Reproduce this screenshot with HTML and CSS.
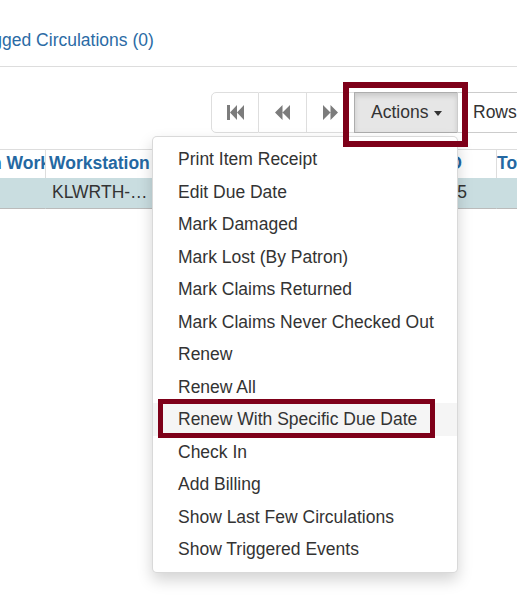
FILE: index.html
```html
<!DOCTYPE html>
<html>
<head>
<meta charset="utf-8">
<link rel="stylesheet" href="styles.css">
</head>
<body>
<div class="page">
  <div class="tabs">
    <a class="tab-link">Flagged Circulations (0)</a>
  </div>

  <div class="toolbar">
    <div class="pager">
      <button class="pg-btn first" aria-label="First">
        <svg width="17" height="15" viewBox="0 0 17 15"><rect x="0" y="0" width="3" height="15"/><path d="M3 7.5 L10 0 V15 Z M10 7.5 L17 0 V15 Z"/></svg>
      </button>
      <button class="pg-btn" aria-label="Previous">
        <svg width="15" height="15" viewBox="0 0 15 15"><path d="M0 7.5 L7.5 0 V15 Z M7.5 7.5 L15 0 V15 Z"/></svg>
      </button>
      <button class="pg-btn" aria-label="Next">
        <svg width="15" height="15" viewBox="0 0 15 15"><path d="M15 7.5 L7.5 0 V15 Z M7.5 7.5 L0 0 V15 Z"/></svg>
      </button>
    </div>
    <button class="actions-btn">Actions<span class="caret"></span></button>
    <button class="rows-btn">Rows 25</button>
  </div>

  <div class="grid">
    <div class="th c1"><span class="clip">n Workstation</span></div>
    <div class="th c2">Workstation</div>
    <div class="th c3">Due Date</div>
    <div class="th c4">ID</div>
    <div class="th c5">Total</div>
    <div class="td c1"></div>
    <div class="td c2">KLWRTH-…</div>
    <div class="td c3"></div>
    <div class="td c4">5</div>
    <div class="td c5"></div>
  </div>

  <ul class="menu">
    <li>Print Item Receipt</li>
    <li>Edit Due Date</li>
    <li>Mark Damaged</li>
    <li>Mark Lost (By Patron)</li>
    <li>Mark Claims Returned</li>
    <li>Mark Claims Never Checked Out</li>
    <li>Renew</li>
    <li>Renew All</li>
    <li class="hover">Renew With Specific Due Date</li>
    <li>Check In</li>
    <li>Add Billing</li>
    <li>Show Last Few Circulations</li>
    <li>Show Triggered Events</li>
  </ul>

  <div class="callout callout-actions"></div>
  <div class="callout callout-item"></div>
</div>
</body>
</html>
```

FILE: styles.css
```css
html, body {
  margin: 0;
  padding: 0;
  background: #fff;
}

.page {
  position: relative;
  width: 517px;
  height: 611px;
  overflow: hidden;
  font-family: "Liberation Sans", Arial, sans-serif;
  font-size: 17.5px;
  line-height: 25px;
  color: #333;
}

.tabs {
  height: 38px;
  padding-top: 28px;
  border-bottom: 1px solid #ddd;
  white-space: nowrap;
}

.tab-link {
  display: inline-block;
  margin-left: -32px;
  color: #2b6ba5;
  text-decoration: none;
}

.toolbar {
  display: flex;
  margin-top: 25px;
  padding-left: 211px;
  height: 41px;
  width: 700px;
  white-space: nowrap;
}

.toolbar > * {
  flex-shrink: 0;
}

.pager {
  display: flex;
}

.pg-btn {
  flex-shrink: 0;
  width: 48px;
  height: 41px;
  box-sizing: border-box;
  border: 1px solid #dedede;
  border-left: none;
  background: #fff;
  padding: 0;
  display: flex;
  align-items: center;
  justify-content: center;
  fill: #7c7c7c;
}

.pg-btn.first {
  border-left: 1px solid #dedede;
  border-radius: 5px 0 0 5px;
}

.actions-btn {
  margin-left: -1px;
  width: 104px;
  height: 41px;
  box-sizing: border-box;
  border: 1px solid #adadad;
  background: #e6e6e6;
  box-shadow: inset 0 3px 5px rgba(0, 0, 0, 0.125);
  padding: 0 0 0 16px;
  display: flex;
  align-items: center;
  font: inherit;
  color: #333;
}

.caret {
  display: inline-block;
  margin-left: 6px;
  margin-top: 2px;
  width: 0;
  height: 0;
  border-top: 5px solid #333;
  border-left: 4.5px solid transparent;
  border-right: 4.5px solid transparent;
}

.rows-btn {
  margin-left: -1px;
  height: 41px;
  box-sizing: border-box;
  border: 1px solid #ccc;
  border-radius: 0 5px 5px 0;
  background: #fff;
  padding: 0 15px;
  font: inherit;
  color: #333;
}

.grid {
  display: grid;
  grid-template-columns: 45px 110px 200px 141px 100px;
  margin-top: 16px;
  width: 596px;
  border-top: 1px solid #ddd;
}

.th, .td {
  white-space: nowrap;
  overflow: hidden;
  box-sizing: border-box;
  border-left: 1px solid #ddd;
}

.th.c1, .td.c1 {
  border-left: none;
}

.th {
  height: 28px;
  padding-top: 1px;
  font-weight: bold;
  color: #2468a2;
}

.td {
  height: 31px;
  padding-top: 2px;
  background: #c9dde0;
  border-left-color: #c9dde0;
  border-bottom: 1px solid #bbb;
}

.clip {
  display: inline-block;
  margin-left: -9px;
}

.th.c2 { padding-left: 3px; }
.td.c2 { padding-left: 6px; }
.th.c4 { text-align: right; padding-right: 34px; }
.td.c4 { text-align: right; padding-right: 29px; }
.th.c5 { padding-left: 0; }

.menu {
  position: absolute;
  left: 152px;
  top: 136px;
  width: 306px;
  box-sizing: border-box;
  margin: 0;
  padding: 6.25px 0;
  list-style: none;
  background: #fff;
  border: 1px solid rgba(0, 0, 0, 0.15);
  border-radius: 5px;
  box-shadow: 0 7px 15px rgba(0, 0, 0, 0.175);
}

.menu li {
  padding: 3.75px 25px;
  line-height: 25px;
  white-space: nowrap;
  color: #333;
}

.menu li.hover {
  background: #f5f5f5;
}

.callout {
  position: absolute;
  box-sizing: border-box;
  border-style: solid;
  border-color: #7e0019;
}

.callout-actions {
  left: 343px;
  top: 82px;
  width: 125px;
  height: 65px;
  border-width: 6px;
}

.callout-item {
  left: 158px;
  top: 399px;
  width: 277px;
  height: 39px;
  border-width: 5px;
}
```
